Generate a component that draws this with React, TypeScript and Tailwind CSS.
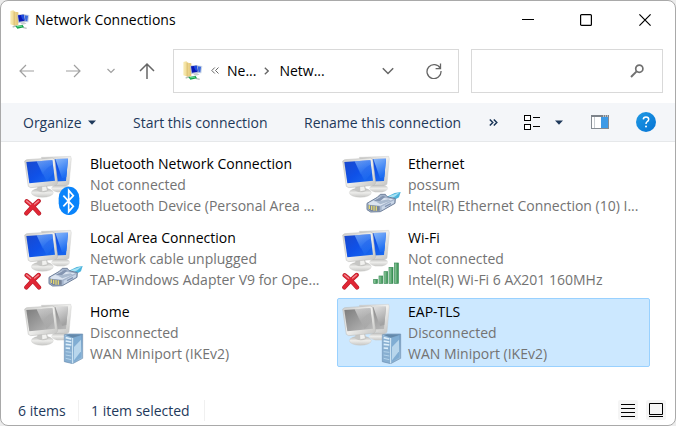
import React, { useState } from "react";

type Badge = "bluetooth" | "plug" | "wifi" | "server";

interface Connection {
  name: string;
  status: string;
  device: string;
  badge: Badge;
  error?: boolean;
  disabled?: boolean;
}

const connections: Connection[] = [
  { name: "Bluetooth Network Connection", status: "Not connected", device: "Bluetooth Device (Personal Area ...", badge: "bluetooth", error: true },
  { name: "Ethernet", status: "possum", device: "Intel(R) Ethernet Connection (10) I...", badge: "plug" },
  { name: "Local Area Connection", status: "Network cable unplugged", device: "TAP-Windows Adapter V9 for Ope...", badge: "plug", error: true },
  { name: "Wi-Fi", status: "Not connected", device: "Intel(R) Wi-Fi 6 AX201 160MHz", badge: "wifi", error: true },
  { name: "Home", status: "Disconnected", device: "WAN Miniport (IKEv2)", badge: "server", disabled: true },
  { name: "EAP-TLS", status: "Disconnected", device: "WAN Miniport (IKEv2)", badge: "server", disabled: true },
];

function Gradients() {
  return (
    <svg className="absolute size-0" aria-hidden="true">
      <defs>
        <linearGradient id="blueScreen" x1="0" y1="0" x2="1" y2="1">
          <stop offset="0" stopColor="#1a48cc" />
          <stop offset="0.5" stopColor="#0f51e8" />
          <stop offset="1" stopColor="#1a6cf0" />
        </linearGradient>
        <linearGradient id="blueShine" x1="0" y1="0" x2="0.4" y2="1">
          <stop offset="0" stopColor="#8ab8fa" />
          <stop offset="1" stopColor="#1f6ff2" />
        </linearGradient>
        <linearGradient id="greyScreen" x1="0" y1="0" x2="1" y2="1">
          <stop offset="0" stopColor="#7c7c7c" />
          <stop offset="1" stopColor="#bdbdbd" />
        </linearGradient>
        <linearGradient id="greyShine" x1="0" y1="0" x2="0.4" y2="1">
          <stop offset="0" stopColor="#e2e2e2" />
          <stop offset="1" stopColor="#a2a2a2" />
        </linearGradient>
        <linearGradient id="frame" x1="0" y1="0" x2="1" y2="1">
          <stop offset="0" stopColor="#cbcbc9" />
          <stop offset="0.5" stopColor="#f0f0ee" />
          <stop offset="1" stopColor="#c3c3c1" />
        </linearGradient>
        <linearGradient id="base" x1="0" y1="0" x2="0" y2="1">
          <stop offset="0" stopColor="#b2b2b0" />
          <stop offset="0.5" stopColor="#ededeb" />
          <stop offset="1" stopColor="#c6c6c4" />
        </linearGradient>
        <linearGradient id="bars" x1="0" y1="0" x2="1" y2="0">
          <stop offset="0" stopColor="#9ed3ab" />
          <stop offset="1" stopColor="#2f8a4b" />
        </linearGradient>
        <linearGradient id="server" x1="0" y1="0" x2="1" y2="1">
          <stop offset="0" stopColor="#a9cbe6" />
          <stop offset="0.5" stopColor="#6f9cc4" />
          <stop offset="1" stopColor="#a4c8e4" />
        </linearGradient>
        <linearGradient id="help" x1="0" y1="0" x2="1" y2="1">
          <stop offset="0" stopColor="#1f9ae4" />
          <stop offset="1" stopColor="#0673d4" />
        </linearGradient>
        <linearGradient id="folder" x1="0" y1="0" x2="1" y2="0">
          <stop offset="0" stopColor="#f9ecb4" />
          <stop offset="1" stopColor="#e3c574" />
        </linearGradient>
      </defs>
    </svg>
  );
}

function BadgeArt({ kind }: { kind: Badge }) {
  if (kind === "bluetooth") {
    return (
      <g>
        <rect x="176" y="128" width="62" height="85" rx="30" ry="35" fill="#0a84fb" />
        <path d="M190 155 L220 187 L206 203 V139 L220 155 L190 187" fill="none" stroke="#fff" strokeWidth="5" />
      </g>
    );
  }
  if (kind === "plug") {
    return (
      <g strokeLinejoin="round">
        <path d="M207 158 L230 147 L248 144 L243 160 L222 172Z" fill="#4db4dc" />
        <path d="M212 157 L246 145 L232 157 L218 164Z" fill="#a6e2f4" />
        <path d="M147 178 L178 160 L187 151 L202 151 L207 158 L232 164 L231 178 L187 203 L158 204 L147 197Z" fill="#a5b5cc" stroke="#71819b" strokeWidth="3" />
        <path d="M151 178 L184 160 L226 166 L187 185 L154 182Z" fill="#dce5f1" />
        <path d="M166 171 L195 155 L202 158 L184 173Z" fill="#8495b1" />
        <path d="M174 173 L211 166 L219 170 L187 181Z" fill="#a9b9ce" />
        <path d="M151 183 L185 187 L185 200 L158 201 L151 195Z" fill="#77849a" />
        <path d="M154 184 V195 M161 185 V198 M168 186 V200 M175 187 V200" stroke="#e3d775" strokeWidth="4" />
        <path d="M191 188 L228 169 V177 L191 199Z" fill="#c9d6e7" />
        <path d="M201 188 L219 179" stroke="#8193b2" strokeWidth="4" />
      </g>
    );
  }
  if (kind === "wifi") {
    return (
      <g fill="url(#bars)" stroke="#368954" strokeWidth="2">
        <rect x="167" y="184" width="11" height="12" />
        <rect x="183" y="174" width="11" height="22" />
        <rect x="198" y="161" width="11" height="35" />
        <rect x="213" y="148" width="12" height="48" />
        <rect x="229" y="135" width="12" height="61" />
      </g>
    );
  }
  return (
    <g>
      <path d="M193 128 L206 126 L248 126 V199 L218 215 L193 209Z" fill="url(#server)" stroke="#7293b2" strokeWidth="2" />
      <path d="M194 131 L217 139 V213 L194 208Z" fill="#88afd1" />
      <path d="M196 129 L208 127 L246 128 L219 137Z" fill="#6489ab" />
      <path d="M197 137 L214 141 M197 147 L214 150 M197 157 L214 159 M197 168 L210 169" stroke="#deeffb" strokeWidth="5" />
      <path d="M197 179 L214 181 M197 189 L214 192 M197 199 L214 203" stroke="#b4d3eb" strokeWidth="3" />
      <path d="M221 139 L244 130 V196 L221 210Z" fill="#80add3" />
      <path d="M222 165 L243 143 V178 L222 205Z" fill="#b8d6ec" />
      <path d="M218 138 V214" stroke="#dceffa" strokeWidth="3" />
    </g>
  );
}

function ConnectionIcon({ badge, error, disabled }: { badge: Badge; error?: boolean; disabled?: boolean }) {
  const screen = disabled ? "url(#greyScreen)" : "url(#blueScreen)";
  const shine = disabled ? "url(#greyShine)" : "url(#blueShine)";
  return (
    <svg viewBox="69 30 183 186" className="h-[62px] w-[61px] shrink-0" aria-hidden="true">
      <ellipse cx="182" cy="133" rx="28" ry="12" fill="url(#base)" />
      <path d="M124 40 L212 37 L214 44 L207 121 L201 124 L150 121Z" fill="url(#frame)" stroke="#c3c3c1" strokeWidth="1" />
      <path d="M130 46 L204 44 L198 111 L150 113Z" fill={screen} />
      <path d="M166 45 L204 44 L199 99 L186 102Z" fill={shine} />
      <ellipse cx="127" cy="146" rx="33" ry="14" fill="url(#base)" stroke="#c4c4c2" strokeWidth="1" />
      <path d="M112 122 L140 120 L145 140 Q130 149 112 140Z" fill="#c6c6c4" />
      <path d="M126 122 L137 121 L141 139 L127 142Z" fill="#f1f1ef" />
      <path d="M74 51 L80 47 L157 42 L164 45 L173 117 L168 124 L92 131 L85 127Z" fill="url(#frame)" stroke="#b8b8b6" strokeWidth="1.5" />
      <path d="M79 54 L157 49 L165 110 L88 118Z" fill={screen} />
      <path d="M110 52 L157 49 L162 86 L140 112Z" fill={shine} opacity="0.45" />
      <path d="M110 52 L157 49 L159 61 Q134 74 128 92Z" fill={shine} opacity="0.5" />
      {error && (
        <g strokeLinecap="round" fill="none">
          <path d="M80 172 Q96 184 117 208 M116 171 Q96 188 79 208" stroke="#b3202b" strokeWidth="13" />
          <path d="M80 172 Q96 184 117 208 M116 171 Q96 188 79 208" stroke="#e02635" strokeWidth="10" />
          <path d="M80 171 L92 181 M115 171 L104 180" stroke="#f48a91" strokeWidth="4" />
        </g>
      )}
      <BadgeArt kind={badge} />
    </svg>
  );
}

function FolderIcon() {
  return (
    <svg viewBox="30 26 60 60" className="size-5 shrink-0" aria-hidden="true">
      <path d="M31 29 L40 27 L45 31 L55 33 V70 L46 74 L31 69Z" fill="url(#folder)" />
      <path d="M41 32 L44 31 V73 L41 71Z" fill="#c9a84c" opacity="0.5" />
      <path d="M66 38 L88 41 L85 63 L66 62Z" fill="#c9d5e6" />
      <path d="M70 41 L84 43 L82 60 L70 59Z" fill="#3a68dc" />
      <path d="M51 40 L73 38 L77 61 L55 65Z" fill="#b4bfd6" />
      <path d="M54 42 L71 40 L74 58 L57 61Z" fill="#0a18b4" />
      <path d="M62 41 L71 40 L74 57 L67 54Z" fill="#1e4ae0" />
      <path d="M60 64 L72 62 L80 67 L66 70Z" fill="#c8ccd0" />
      <path d="M38 77 L50 73 M68 78 L80 81" stroke="#b7c0bc" strokeWidth="4" />
      <path d="M46 74 L68 71 L72 78 L52 82Z" fill="#14a24a" />
      <path d="M50 75 L66 73 L66 76 L52 78Z" fill="#5fd98a" />
    </svg>
  );
}

function Caret() {
  return (
    <svg viewBox="0 0 8 5" className="h-[5px] w-2 shrink-0" aria-hidden="true">
      <path d="M0 0.5 H8 L4 4.8Z" fill="#1e395b" />
    </svg>
  );
}

function Stroke({ d, box, className, width = 1 }: { d: string; box: string; className: string; width?: number }) {
  return (
    <svg viewBox={box} className={className} fill="none" stroke="currentColor" strokeWidth={width} aria-hidden="true">
      <path d={d} />
    </svg>
  );
}

export default function App() {
  const [selected, setSelected] = useState("EAP-TLS");

  return (
    <div className="min-h-screen bg-[#ececec] font-['Open_Sans','Noto_Sans',sans-serif] text-sm leading-[21px]">
      <Gradients />
      <div className="flex min-h-screen flex-col overflow-hidden rounded-lg border border-[#a9a9a9] bg-white">
        <header className="flex h-[37px] items-center pl-[9px]">
          <FolderIcon />
          <h1 className="ml-[5px] flex-1 whitespace-nowrap text-black">Network Connections</h1>
          <button aria-label="Minimize" className="flex h-full w-[58px] items-center justify-center">
            <Stroke box="0 0 12 12" className="size-3" d="M0 5.5 H12" />
          </button>
          <button aria-label="Maximize" className="flex h-full w-[58px] items-center justify-center">
            <svg viewBox="0 0 12 12" className="size-3" fill="none" stroke="#000" strokeWidth="1.2" aria-hidden="true">
              <rect x="0.6" y="0.6" width="10.8" height="10.8" rx="1" />
            </svg>
          </button>
          <button aria-label="Close" className="flex h-full w-[60px] items-center justify-center">
            <Stroke box="0 0 12 12" className="size-3" width={1.2} d="M0.4 0.4 L11.6 11.6 M11.6 0.4 L0.4 11.6" />
          </button>
        </header>

        <div className="flex h-[65px] items-center gap-3 pr-3">
          <nav className="flex w-40 items-center pl-[18px] text-[#a0a0a0]">
            <button aria-label="Back">
              <Stroke box="0 0 16 14" className="h-3.5 w-4" width={1.2} d="M15 7 H1.5 M7 1 L1 7 L7 13" />
            </button>
            <button aria-label="Forward" className="ml-[30px]">
              <Stroke box="0 0 16 14" className="h-3.5 w-4" width={1.2} d="M1 7 H14.5 M9 1 L15 7 L9 13" />
            </button>
            <button aria-label="Recent locations" className="ml-[26px]">
              <Stroke box="0 0 8 6" className="h-1.5 w-2" width={1.2} d="M0.5 1 L4 4.5 L7.5 1" />
            </button>
            <button aria-label="Up" className="ml-6 text-[#666]">
              <Stroke box="0 0 16 18" className="h-[18px] w-4" width={1.5} d="M8 17 V2 M1 9 L8 2 L15 9" />
            </button>
          </nav>
          <div className="flex h-11 min-w-0 flex-1 items-center border border-[#d9d9d9] pl-[9px] text-[#666]">
            <FolderIcon />
            <Stroke box="0 0 8 7" className="ml-2 h-[7px] w-2" d="M3.8 0.5 L0.8 3.5 L3.8 6.5 M7.5 0.5 L4.5 3.5 L7.5 6.5" />
            <button className="ml-2 whitespace-nowrap text-black">Ne...</button>
            <Stroke box="0 0 5 8" className="ml-2 h-2 w-[5px]" width={1.3} d="M0.8 0.7 L4.2 4 L0.8 7.3" />
            <button className="ml-2.5 flex-1 whitespace-nowrap text-left text-black">Netw...</button>
            <button aria-label="Previous locations">
              <Stroke box="0 0 12 8" className="h-2 w-3" width={1.5} d="M0.8 1.2 L6 6.5 L11.2 1.2" />
            </button>
            <button aria-label="Refresh" className="mr-4 ml-8">
              <Stroke box="0 0 16 16" className="size-4" width={1.3} d="M14.3 5.5 A7 7 0 1 0 15 8 M14.5 0.5 V5.6 H9.6" />
            </button>
          </div>
          <div className="flex h-11 w-48 items-center border border-[#d9d9d9] pr-[18px]">
            <input type="text" aria-label="Search" className="min-w-0 flex-1 bg-transparent px-2 outline-none" />
            <svg viewBox="0 0 14 14" className="size-3.5 text-[#707070]" fill="none" stroke="currentColor" aria-hidden="true">
              <circle cx="9.3" cy="4.7" r="3.6" strokeWidth="1.7" />
              <path d="M6.6 7.4 L1 13" strokeWidth="2" />
            </svg>
          </div>
        </div>

        <div className="flex h-[39px] items-center border-b border-[#e6e8ea] bg-[#f4f6f9] pr-[19px] pl-[22px] whitespace-nowrap text-[#1e395b]">
          <button className="flex w-[110px] items-center gap-1.5">
            Organize
            <Caret />
          </button>
          <button className="w-[171px] text-left">Start this connection</button>
          <button className="flex-1 text-left">Rename this connection</button>
          <button aria-label="More commands">
            <Stroke box="0 0 9 7" className="h-[7px] w-[9px]" width={1.5} d="M0.8 0.5 L3.8 3.5 L0.8 6.5 M4.8 0.5 L7.8 3.5 L4.8 6.5" />
          </button>
          <button aria-label="Change your view" className="ml-[25px] flex items-center gap-3.5">
            <svg viewBox="0 0 18 17" className="h-[17px] w-[18px]" fill="#fff" stroke="#000" strokeWidth="1" aria-hidden="true">
              <rect x="1.5" y="1.5" width="6" height="5" />
              <rect x="1.5" y="10.5" width="6" height="5" />
              <path d="M10 3.5 H17 M10 12.5 H17" />
            </svg>
            <Caret />
          </button>
          <button aria-label="Preview pane" className="ml-7">
            <svg viewBox="0 0 18 14" className="h-3.5 w-[18px]" aria-hidden="true">
              <rect x="0.5" y="0.5" width="17" height="13" fill="#fff" stroke="#858b92" />
              <path d="M0 1 H18" stroke="#7d838a" strokeWidth="2" />
              <path d="M3.5 2 V13" stroke="#c6cbd0" />
              <rect x="10" y="2" width="7" height="11" fill="#3d9ae6" />
              <path d="M12 1 H13 M14 1 H15 M16 1 H17" stroke="#fff" />
            </svg>
          </button>
          <button aria-label="Help" className="ml-[27px]">
            <svg viewBox="0 0 20 20" className="size-5" aria-hidden="true">
              <circle cx="10" cy="10" r="10" fill="url(#help)" />
              <path d="M7.3 7.4 Q7.4 4.9 10 4.9 Q12.7 4.9 12.7 7.2 Q12.7 8.6 11.3 9.5 Q10 10.4 10 12" fill="none" stroke="#fff" strokeWidth="1.5" />
              <circle cx="10" cy="14.6" r="1" fill="#fff" />
            </svg>
          </button>
        </div>

        <main className="grid flex-1 grid-cols-[repeat(auto-fill,313px)] content-start gap-[5px] pt-2 pb-6 pl-[18px]">
          {connections.map((c) => {
            const active = c.name === selected;
            return (
              <button
                key={c.name}
                aria-pressed={active}
                onClick={() => setSelected(c.name)}
                className={`flex h-[69px] items-center rounded-xs border pl-[3px] text-left ${
                  active ? "border-[#99d1ff] bg-[#cce8ff]" : "border-transparent"
                }`}
              >
                <ConnectionIcon badge={c.badge} error={c.error} disabled={c.disabled} />
                <span className="ml-1.5 flex flex-col whitespace-nowrap text-[#737373]">
                  <span className="text-black">{c.name}</span>
                  <span>{c.status}</span>
                  <span>{c.device}</span>
                </span>
              </button>
            );
          })}
        </main>

        <footer className="flex h-[30px] items-center pr-[9px] pl-[17px] text-[#1e395b]">
          <span className="w-[61px] border-r border-[#f0f0f0]">6 items</span>
          <span className="w-[126px] border-r border-[#f0f0f0] pl-3">1 item selected</span>
          <button aria-label="Details view" className="ml-auto rounded-xs bg-[#f5f5f5] p-[3px] text-black">
            <Stroke box="0 0 14 14" className="size-3.5" d="M0 1.5 H14 M0 5.5 H14 M0 9.5 H14 M0 13.5 H14" />
          </button>
          <button aria-label="Large icons view" className="ml-2 rounded-xs bg-[#f5f5f5] p-[3px] text-black">
            <Stroke box="0 0 14 14" className="size-3.5" d="M0.5 0.5 H13.5 V11.5 H0.5 Z M0 13.5 H14" />
          </button>
        </footer>
      </div>
    </div>
  );
}
